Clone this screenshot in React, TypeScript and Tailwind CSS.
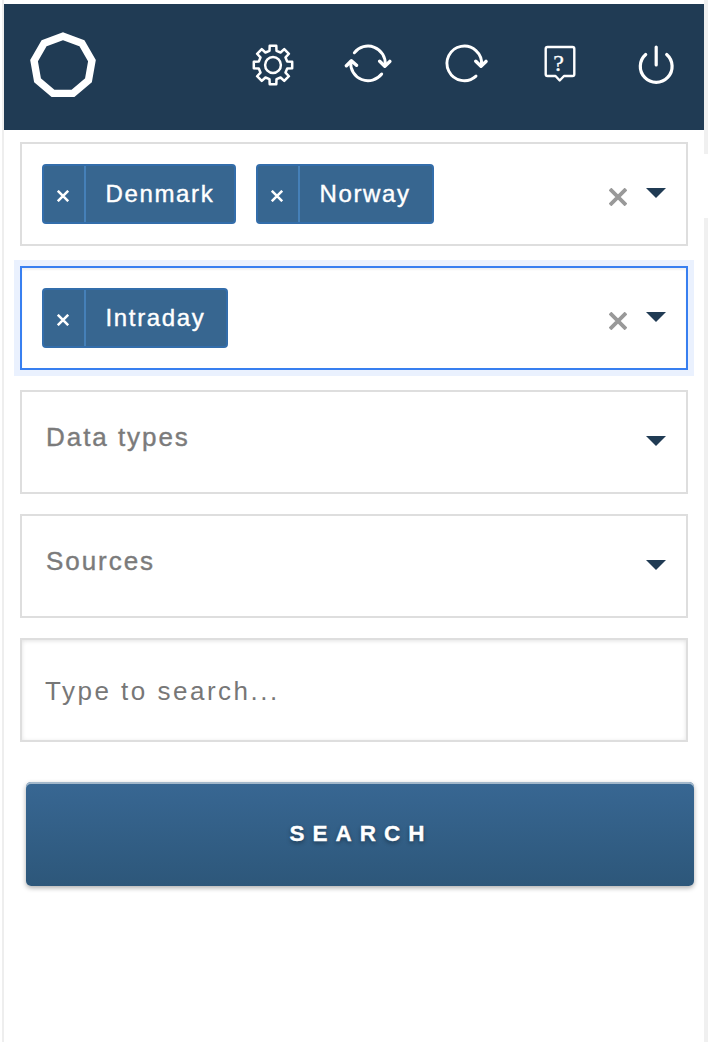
import type { ReactNode } from "react";

function ring(radius: number, count: number, cx: number, cy: number): string {
  return Array.from({ length: count }, (_, i) => {
    const a = (i * 2 * Math.PI) / count;
    return `${(cx + radius * Math.sin(a)).toFixed(2)},${(cy - radius * Math.cos(a)).toFixed(2)}`;
  }).join(" ");
}

function gearPoints(): string {
  const tooth = [
    [-3.5, -14.2],
    [-3.3, -19.2],
    [3.3, -19.2],
    [3.5, -14.2],
  ];
  const points: string[] = [];
  for (let i = 0; i < 8; i++) {
    const a = (i * Math.PI) / 4;
    for (const [x, y] of tooth) {
      const px = 24 + x * Math.cos(a) - y * Math.sin(a);
      const py = 24 + x * Math.sin(a) + y * Math.cos(a);
      points.push(`${px.toFixed(2)},${py.toFixed(2)}`);
    }
  }
  return points.join(" ");
}

function Icon({ label, children }: { label: string; children: ReactNode }) {
  return (
    <button aria-label={label} className="size-12 shrink-0">
      <svg
        viewBox="0 0 48 48"
        className="size-12"
        fill="none"
        stroke="white"
        strokeWidth="2.9"
        strokeLinecap="round"
        strokeLinejoin="round"
      >
        {children}
      </svg>
    </button>
  );
}

function Header() {
  return (
    <header className="flex h-[126px] items-start bg-[#203b54] pt-[37px]">
      <svg viewBox="0 0 70 70" className="-mt-[11px] ml-6 size-[70px] shrink-0">
        <polygon points={ring(29.4, 9, 35, 35.7)} fill="none" stroke="white" strokeWidth="7.4" />
      </svg>
      <nav className="ml-[151px] flex">
        <Icon label="Settings">
          <g strokeWidth="2.5">
            <polygon points={gearPoints()} />
            <circle cx="24" cy="24" r="7.9" />
          </g>
        </Icon>
        <div className="ml-[47px] flex">
          <Icon label="Sync">
            <path d="M10.3 11.8A17.3 17.3 0 0 1 41.2 24M6.8 20.8A17.3 17.3 0 0 0 37.7 33" />
            <path d="M35.7 20.2 40.8 25.2 45.8 20.4M2.4 24.8 7.4 19.8 12.5 24.3" strokeWidth="3.4" />
          </Icon>
        </div>
        <div className="ml-[48px] flex">
          <Icon label="Reload">
            <path d="M36 35.1A17.3 17.3 0 1 1 41.5 24" />
            <path d="M35.8 20.2 41 25.2 46 20.4" strokeWidth="3.4" />
          </Icon>
        </div>
        <div className="ml-[48px] flex">
          <Icon label="Help">
            <path
              d="M11.5 6H36.5Q38.3 6 38.3 7.8V33.2Q38.3 35 36.5 35H28L23.7 39.5 19.5 35H11.5Q9.7 35 9.7 33.2V7.8Q9.7 6 11.5 6Z"
              strokeWidth="2.4"
            />
            <text
              x="22.7"
              y="30"
              textAnchor="middle"
              fill="white"
              stroke="white"
              strokeWidth="0.3"
              className="font-['Liberation_Serif',serif] text-[24px]"
            >
              ?
            </text>
          </Icon>
        </div>
        <div className="ml-[48px] flex">
          <Icon label="Log out">
            <path d="M13.7 13.5A15.9 15.9 0 1 0 34.7 13.5M24.2 6V24" strokeWidth="3.2" />
          </Icon>
        </div>
      </nav>
    </header>
  );
}

function Tag({ label, width }: { label: string; width: string }) {
  return (
    <div
      className={`flex h-[60px] shrink-0 rounded-[4px] border-2 border-[#336daa] bg-[#376690] text-white ${width}`}
    >
      <button
        aria-label={`Remove ${label}`}
        className="flex w-[42px] shrink-0 justify-center border-r-2 border-[#4580b8] pr-[2px] pt-[24px]"
      >
        <svg viewBox="0 0 12 12" className="size-3" stroke="white" strokeWidth="2.5">
          <path d="M.8.8 11.2 11.2M11.2.8.8 11.2" />
        </svg>
      </button>
      <span className="pl-[19.5px] pt-[12px] text-[24px] leading-8 tracking-[1.65px] [-webkit-text-stroke:0.4px_white]">
        {label}
      </span>
    </div>
  );
}

function Arrow() {
  return (
    <svg viewBox="0 0 20 10" className="h-[10px] w-5 shrink-0">
      <path d="M0 0H20L10 10Z" fill="#203b54" />
    </svg>
  );
}

function Select({
  placeholder,
  focused,
  children,
}: {
  placeholder?: string;
  focused?: boolean;
  children?: ReactNode;
}) {
  return (
    <div
      className={
        focused
          ? "flex h-[104px] border-2 border-[#387ff0] bg-white px-5 pt-5 shadow-[0_0_0_6px_#eaf1fe,inset_0_2px_2px_rgba(0,0,0,0.06)]"
          : "flex h-[104px] border-2 border-[#dedede] bg-white px-5 pt-5"
      }
    >
      <div className="flex flex-1 gap-5">
        {placeholder ? (
          <span className="pl-1 pt-[9px] text-[26px] leading-8 tracking-[1.95px] text-[#7b7b7b] [-webkit-text-stroke:0.4px_#7b7b7b]">
            {placeholder}
          </span>
        ) : (
          children
        )}
      </div>
      {!placeholder && (
        <button aria-label="Clear all" className="mr-[19px] mt-[24px] h-[18px]">
          <svg viewBox="0 0 18 18" className="size-[18px]" stroke="#999" strokeWidth="3.8">
            <path d="M1 1 17 17M17 1 1 17" />
          </svg>
        </button>
      )}
      <div className="pt-[24px]">
        <Arrow />
      </div>
    </div>
  );
}

export default function App() {
  return (
    <div className="flex h-[1042px] w-[708px] bg-white font-['Liberation_Sans',sans-serif]">
      <div className="w-1 shrink-0 border-r-2 border-[#eee]" />
      <main className="w-[700px] shrink-0 pt-1">
        <Header />
        <form className="flex flex-col px-4 pt-3">
          <div className="flex flex-col gap-5">
            <Select>
              <Tag label="Denmark" width="w-[194px]" />
              <Tag label="Norway" width="w-[178px]" />
            </Select>
            <Select focused>
              <Tag label="Intraday" width="w-[186px]" />
            </Select>
            <Select placeholder="Data types" />
            <Select placeholder="Sources" />
            <input
              type="text"
              placeholder="Type to search..."
              className="h-[104px] border-2 border-[#dedede] px-[23px] pt-[3px] text-[26px] tracking-[2.5px] shadow-[inset_0_1px_4px_rgba(0,0,0,0.12)] placeholder:text-[#777]"
            />
          </div>
          <button
            type="button"
            className="ml-1.5 mt-10 h-[104px] w-[668px] rounded-[5px] bg-linear-to-b from-[#386793] to-[#2d577a] pb-px pl-[2px] text-[22.5px] font-bold tracking-[8px] text-white shadow-[inset_0_2px_0_#a3b8cb,0_2px_5px_rgba(0,0,0,0.32)] [-webkit-text-stroke:0.3px_white] [text-shadow:0_2px_4px_rgba(0,0,0,0.4)]"
          >
            SEARCH
          </button>
        </form>
      </main>
      <div className="flex w-1 shrink-0 flex-col">
        <div className="h-[154px] bg-[#f0f0f0]" />
        <div className="h-16" />
        <div className="flex-1 bg-[#f0f0f0]" />
      </div>
    </div>
  );
}
